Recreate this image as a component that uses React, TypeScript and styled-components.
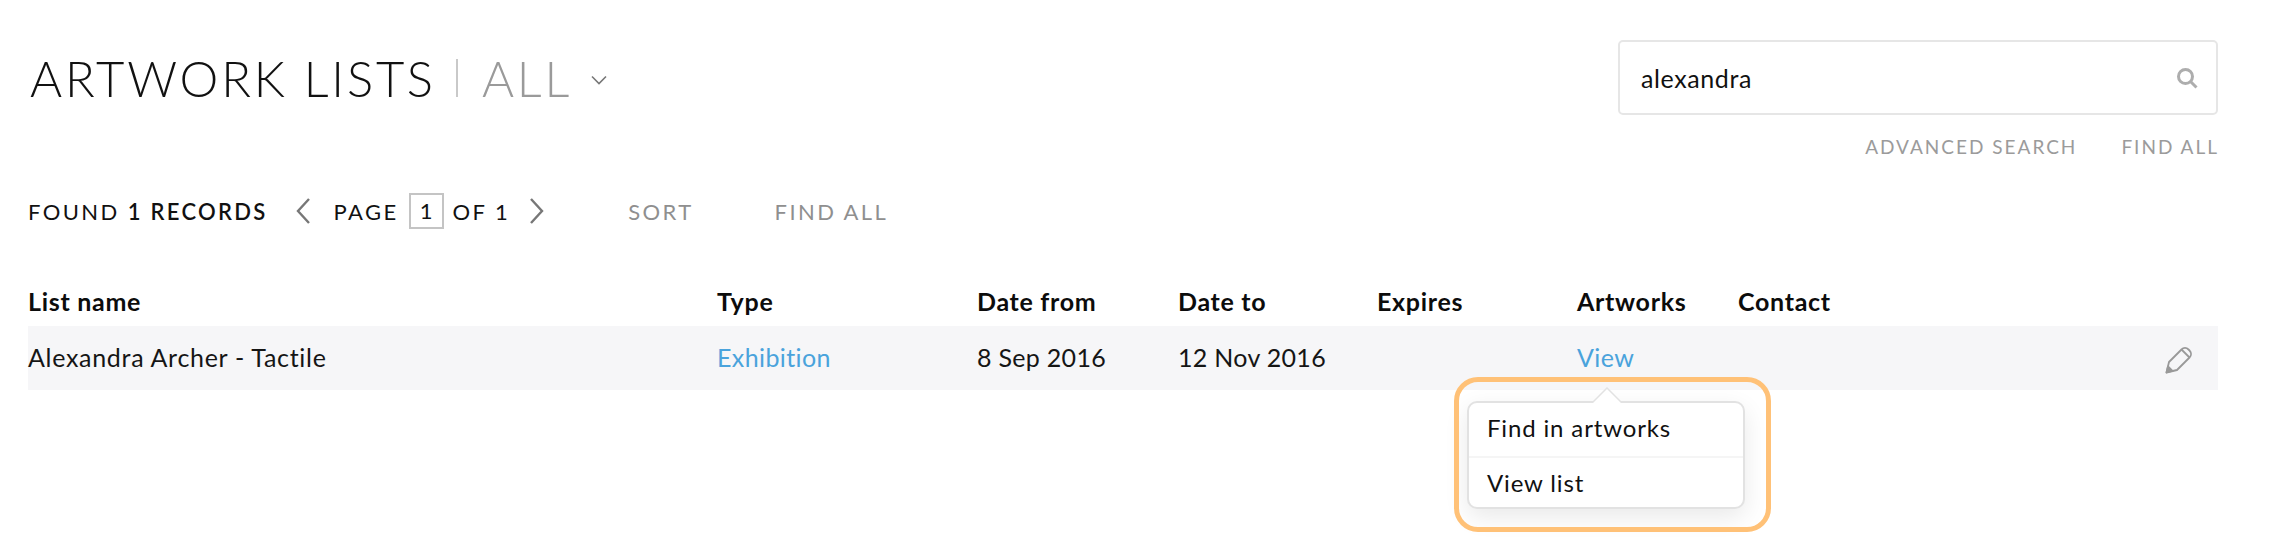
import React from "react";
import styled, { createGlobalStyle } from "styled-components";

const Global = createGlobalStyle`
  html, body { margin: 0; padding: 0; background: #fff; }
  body { font-family: Lato, "Noto Sans", sans-serif; color: #111; }
`;
const Page = styled.div`
  width: 2280px; height: 554px; box-sizing: border-box; padding: 40px 62px 0 28px; overflow: hidden;
`;
const Top = styled.header`
  display: flex; justify-content: space-between; align-items: flex-start; height: 150px;
`;
const Title = styled.h1`
  margin: 12px 0 0 2px; display: flex; align-items: center; font-size: 49px; line-height: 52px; font-weight: 300; letter-spacing: 2.8px; white-space: nowrap;
`;
const Divider = styled.span`
  width: 2px; height: 38px; background: #c9c9c9; margin: 0 24px 0 20px;
`;
const Muted = styled.span` color: #9a9a9a; `;
const Caret = styled.svg` margin-left: 19px; margin-top: 4px; `;
const SearchCol = styled.div` width: 600px; display: flex; flex-direction: column; `;
const SearchBox = styled.div`
  height: 75px; box-sizing: border-box; border: 2px solid #e6e6e6; border-radius: 5px; display: flex; align-items: center; justify-content: space-between; padding: 0 18px 0 21px; font-size: 25px; letter-spacing: .6px; color: #111;
`;
const SearchLinks = styled.div`
  display: flex; justify-content: flex-end; gap: 44px; margin: 20px -1px 0 0; font-size: 19px; line-height: 24px; letter-spacing: 2px; color: #9b9b9b;
`;
const Toolbar = styled.div`
  display: flex; align-items: center; height: 42px; font-size: 22px; letter-spacing: 2.4px; white-space: nowrap;
`;
const Bold = styled.b` font-weight: 600; letter-spacing: 2.3px; `;
const Pager = styled.span`
  display: inline-block; width: 35px; height: 36px; box-sizing: border-box; border: 2px solid #c4c4c4; text-align: center; line-height: 32px; margin: 0 9px 0 10px; letter-spacing: 0;
`;
const Chevron = styled.svg<{ $l?: number; $r?: number }>`
  margin-left: ${p => p.$l ?? 0}px; margin-right: ${p => p.$r ?? 0}px;
`;
const Action = styled.span<{ $l: number }>` margin-left: ${p => p.$l}px; color: #8f8f8f; `;
const Grid = styled.div`
  display: grid; grid-template-columns: 689px 260px 201px 199px 200px 161px 1fr 70px;
  align-items: center;
`;
const HeadRow = styled(Grid)`
  margin-top: 44px; height: 50px; font-size: 25px; letter-spacing: .7px; font-weight: 700; color: #0c0c0c;
`;
const Row = styled(Grid)`
  height: 64px; box-sizing: border-box; padding-bottom: 2px; background: #f6f6f8; font-size: 25px; letter-spacing: .7px; color: #151515;
`;
const Dated = styled.div` letter-spacing: .3px; `;
const Link = styled.span` color: #4aa3dc; letter-spacing: .4px; `;
const ViewCell = styled.div`
  position: relative; height: 62px; line-height: 62px;
`;
const Popover = styled.div`
  position: absolute; left: -110px; top: 75px; width: 278px; height: 108px; box-sizing: border-box; background: #fff; border: 2px solid #e2e2e2; border-radius: 10px; box-shadow: 0 8px 24px rgba(0,0,0,.09); color: #111; font-size: 24px; letter-spacing: .85px; line-height: 50px;
`;
const Arrow = styled.svg`
  position: absolute; left: 123px; top: -16px;
`;
const Item = styled.div<{ $line?: boolean }>`
  height: 53px; padding-left: 18px; ${p => p.$line ? "border-bottom: 2px solid #f5f5f5;" : ""}
`;
const Ring = styled.div`
  position: absolute; left: -15px; top: -26px; right: -28px; bottom: -25px; border: 5px solid #ffc177; border-radius: 24px; pointer-events: none;
`;
const EditCell = styled.div` display: flex; justify-content: flex-end; padding-right: 25px; margin-top: 6px; `;

export default function App() {
  return (
    <Page>
      <Global />
      <Top>
        <Title>
          ARTWORK LISTS<Divider /><Muted>ALL</Muted>
          <Caret width="16" height="10" viewBox="0 0 16 10" fill="none" stroke="#777" strokeWidth="1.6"><path d="M1 1.5l7 7 7-7" /></Caret>
        </Title>
        <SearchCol>
          <SearchBox>
            alexandra
            <svg width="22" height="22" viewBox="0 0 22 22" fill="none" stroke="#adadad" strokeWidth="3"><circle cx="9.5" cy="9.5" r="7" /><path d="M14.5 14.5l6 6" /></svg>
          </SearchBox>
          <SearchLinks><span>ADVANCED SEARCH</span><span>FIND ALL</span></SearchLinks>
        </SearchCol>
      </Top>
      <Toolbar>
        FOUND&nbsp;<Bold>1 RECORDS</Bold>
        <Chevron $l={27} $r={23} width="16" height="28" viewBox="0 0 16 28" fill="none" stroke="#777" strokeWidth="2.4"><path d="M14 2L3 14l11 12" /></Chevron>
        PAGE<Pager>1</Pager>OF 1
        <Chevron $l={19} width="16" height="28" viewBox="0 0 16 28" fill="none" stroke="#777" strokeWidth="2.4"><path d="M2 2l11 12L2 26" /></Chevron>
        <Action $l={83}>SORT</Action>
        <Action $l={81}>FIND ALL</Action>
      </Toolbar>
      <HeadRow>
        <div>List name</div><div>Type</div><div>Date from</div><div>Date to</div><div>Expires</div><div>Artworks</div><div>Contact</div><div />
      </HeadRow>
      <Row>
        <div>Alexandra Archer - Tactile</div>
        <div><Link>Exhibition</Link></div>
        <Dated>8 Sep 2016</Dated>
        <Dated>12 Nov 2016</Dated>
        <div />
        <ViewCell>
          <Link>View</Link>
          <Popover>
            <Arrow width="30" height="16" viewBox="0 0 30 16"><path d="M0 16L15 1l15 15" fill="#fff" stroke="#e2e2e2" strokeWidth="1.5" /></Arrow>
            <Item $line>Find in artworks</Item>
            <Item>View list</Item>
            <Ring />
          </Popover>
        </ViewCell>
        <div />
        <EditCell>
          <svg width="28" height="28" viewBox="0 0 28 28" fill="none" stroke="#999" strokeWidth="1.8" strokeLinejoin="round"><path d="M1.500 26.500L4 16 16.500 3.500c2-2 5-2 7 0l1 1c2 2 2 5 0 7L12 24z" /><path d="M16.500 3.500l8 8" /><path d="M1.500 26.500L3 20.500 7.500 25z" fill="#999" /></svg>
        </EditCell>
      </Row>
    </Page>
  );
}
